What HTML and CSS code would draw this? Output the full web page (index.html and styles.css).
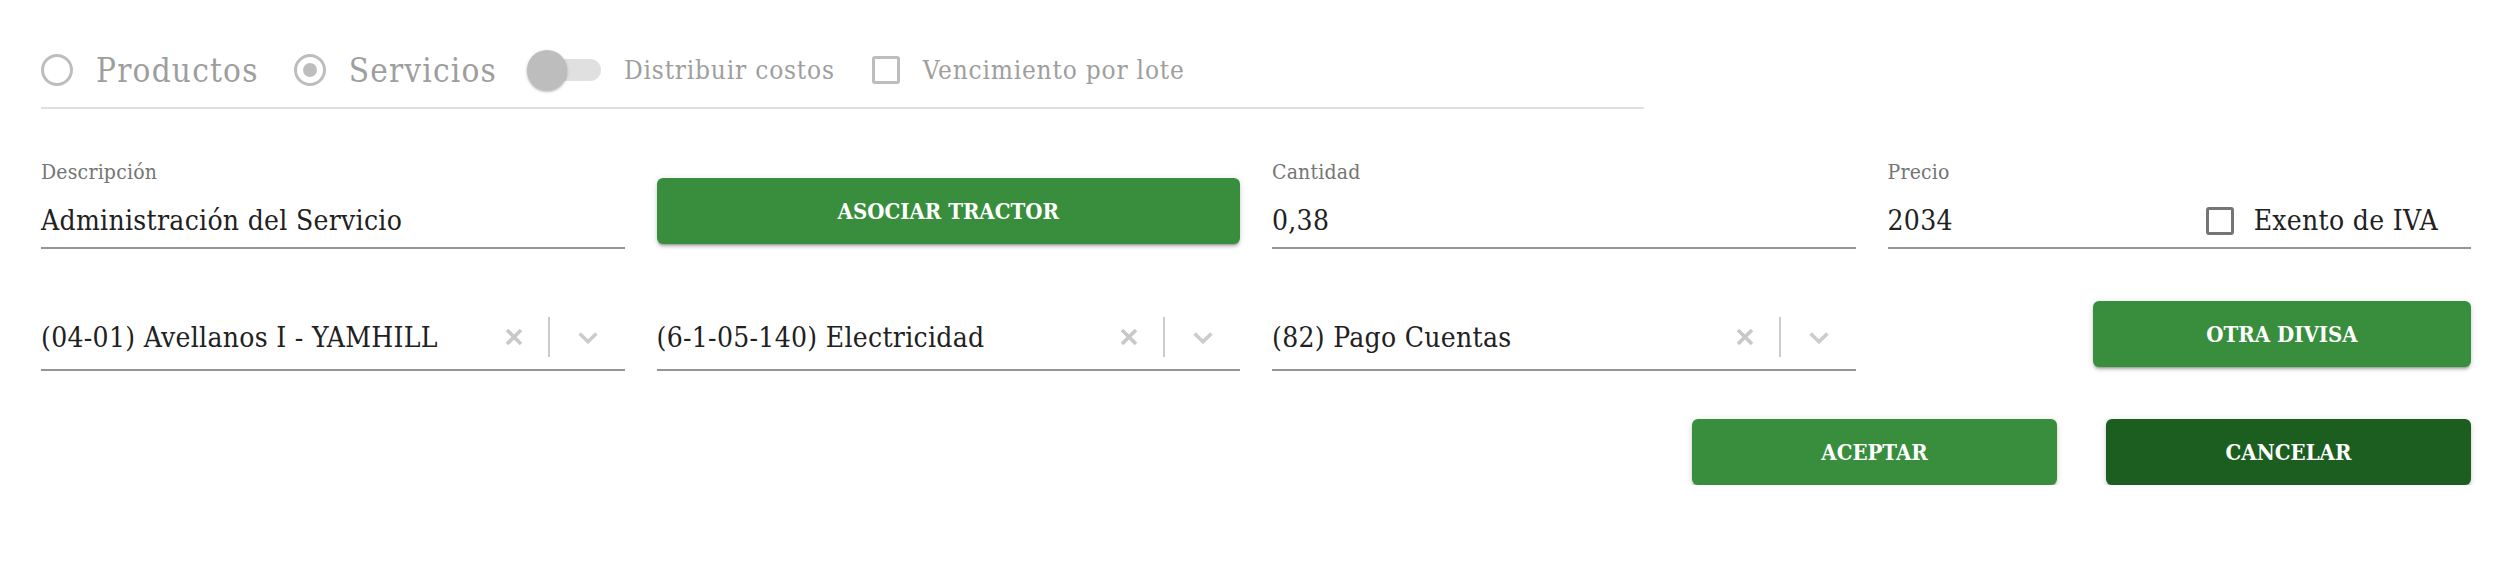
FILE: index.html
```html
<!DOCTYPE html>
<html lang="es">

<head>
    <meta charset="UTF-8">
    <meta name="viewport" content="width=device-width, initial-scale=1.0">
    <title>Detalle de servicio</title>
    <link rel="stylesheet" href="styles.css">
</head>

<body>
    <div class="formulario">
        <div class="barra-tipo">
            <span class="radio"></span>
            <span class="tipo">Productos</span>
            <span class="radio marcado"></span>
            <span class="tipo">Servicios</span>
            <span class="switch"><span class="pulgar"></span></span>
            <span class="opcion">Distribuir costos</span>
            <span class="casilla"></span>
            <span class="opcion">Vencimiento por lote</span>
        </div>

        <div class="fila fila-datos">
            <div class="campo">
                <label class="etiqueta">Descripción</label>
                <div class="valor">Administración del Servicio</div>
            </div>
            <button class="boton boton-asociar">Asociar tractor</button>
            <div class="campo">
                <label class="etiqueta">Cantidad</label>
                <div class="valor">0,38</div>
            </div>
            <div class="campo">
                <label class="etiqueta">Precio</label>
                <div class="valor valor-precio">
                    <span>2034</span>
                    <span class="iva"><span class="casilla oscura"></span>Exento de IVA</span>
                </div>
            </div>
        </div>

        <div class="fila fila-selects">
            <div class="select">
                <span class="select-texto">(04-01) Avellanos I - YAMHILL</span>
                <svg class="limpiar" viewBox="0 0 20 20" width="20" height="20"><path d="M3 3l14 14M17 3L3 17" stroke="#c8c8c8" stroke-width="3.6"/></svg>
                <span class="divisor"></span>
                <svg class="flecha" viewBox="0 0 20 20" width="24" height="24"><path d="M3 7l7 7 7-7" fill="none" stroke="#cccccc" stroke-width="3"/></svg>
            </div>
            <div class="select">
                <span class="select-texto">(6-1-05-140) Electricidad</span>
                <svg class="limpiar" viewBox="0 0 20 20" width="20" height="20"><path d="M3 3l14 14M17 3L3 17" stroke="#c8c8c8" stroke-width="3.6"/></svg>
                <span class="divisor"></span>
                <svg class="flecha" viewBox="0 0 20 20" width="24" height="24"><path d="M3 7l7 7 7-7" fill="none" stroke="#cccccc" stroke-width="3"/></svg>
            </div>
            <div class="select">
                <span class="select-texto">(82) Pago Cuentas</span>
                <svg class="limpiar" viewBox="0 0 20 20" width="20" height="20"><path d="M3 3l14 14M17 3L3 17" stroke="#c8c8c8" stroke-width="3.6"/></svg>
                <span class="divisor"></span>
                <svg class="flecha" viewBox="0 0 20 20" width="24" height="24"><path d="M3 7l7 7 7-7" fill="none" stroke="#cccccc" stroke-width="3"/></svg>
            </div>
            <div class="celda-divisa">
                <button class="boton boton-divisa">Otra divisa</button>
            </div>
        </div>

        <div class="acciones">
            <button class="boton">Aceptar</button>
            <button class="boton boton-oscuro">Cancelar</button>
        </div>
    </div>
</body>

</html>
```

FILE: styles.css
```css
body {
    margin: 0;
    background-color: white;
    font-family: "DejaVu Serif Condensed", "DejaVu Serif", serif;
    color: #212121;
}

.formulario {
    width: 2430px;
    padding: 50px 0 0 41px;
}

.barra-tipo {
    display: flex;
    align-items: center;
    width: 1603px;
    height: 40px;
    padding-bottom: 17px;
    border-bottom: 2px solid #e0e0e0;
}

.radio {
    box-sizing: border-box;
    width: 32px;
    height: 32px;
    border: 3px solid #bdbdbd;
    border-radius: 50%;
    display: flex;
    align-items: center;
    justify-content: center;
}

.radio.marcado {
    margin-left: 35px;
}

.radio.marcado::after {
    content: "";
    width: 14px;
    height: 14px;
    border-radius: 50%;
    background-color: #bdbdbd;
}

.tipo {
    margin-left: 23px;
    font-size: 33px;
    letter-spacing: 1.2px;
    color: #9e9e9e;
}

.switch {
    position: relative;
    margin-left: 30px;
    width: 74px;
    height: 22px;
    display: flex;
    align-items: center;
}

.switch::before {
    content: "";
    margin-left: 14px;
    width: 60px;
    height: 22px;
    border-radius: 11px;
    background-color: #e0e0e0;
}

.pulgar {
    position: absolute;
    left: 0;
    top: -9px;
    width: 40px;
    height: 40px;
    border-radius: 50%;
    background-color: #bdbdbd;
    box-shadow: 0 2px 2px rgba(0, 0, 0, .2), 0 1px 4px rgba(0, 0, 0, .12);
}

.opcion {
    margin-left: 23px;
    font-size: 26px;
    letter-spacing: 0.8px;
    color: #9e9e9e;
}

.casilla {
    box-sizing: border-box;
    margin-left: 37px;
    width: 28px;
    height: 28px;
    border: 3px solid #bdbdbd;
    border-radius: 3px;
}

.fila {
    display: grid;
    grid-template-columns: repeat(4, 1fr);
    column-gap: 32px;
}

.fila-datos {
    margin-top: 51px;
}

.campo {
    display: flex;
    flex-direction: column;
}

.etiqueta {
    font-size: 21px;
    line-height: 24px;
    letter-spacing: 0.2px;
    color: #757575;
}

.valor {
    margin-top: 19px;
    font-size: 28px;
    line-height: 36px;
    letter-spacing: 0.3px;
    padding-bottom: 8px;
    border-bottom: 2px solid #949494;
}

.valor-precio {
    display: flex;
    justify-content: space-between;
    align-items: center;
}

.iva {
    display: flex;
    align-items: center;
    margin-right: 33px;
}

.casilla.oscura {
    margin: 0 20px 0 0;
    border-color: #757575;
}

.boton {
    height: 66px;
    border: none;
    border-radius: 6px;
    background-color: #388e3c;
    color: white;
    font-family: inherit;
    font-size: 22px;
    font-weight: bold;
    text-transform: uppercase;
    box-shadow: 0 3px 2px -2px rgba(0, 0, 0, .25), 0 3px 3px rgba(0, 0, 0, .14), 0 1px 7px rgba(0, 0, 0, .12);
}

.boton-asociar {
    align-self: end;
    margin-bottom: 5px;
}

.fila-selects {
    margin-top: 52px;
}

.select {
    display: flex;
    align-items: center;
    height: 64px;
    padding-top: 4px;
    border-bottom: 2px solid #949494;
}

.select-texto {
    flex: 1;
    font-size: 28px;
    letter-spacing: 0.3px;
}

.divisor {
    margin: 0 26px 0 24px;
    width: 2px;
    height: 40px;
    background-color: #cccccc;
}

.flecha {
    margin-right: 25px;
}

.celda-divisa {
    display: flex;
    justify-content: flex-end;
}

.boton-divisa {
    width: 378px;
}

.acciones {
    display: flex;
    justify-content: flex-end;
    gap: 49px;
    margin-top: 48px;
}

.acciones .boton {
    width: 365px;
}

.boton-oscuro {
    background-color: #1b5e20;
}
```
